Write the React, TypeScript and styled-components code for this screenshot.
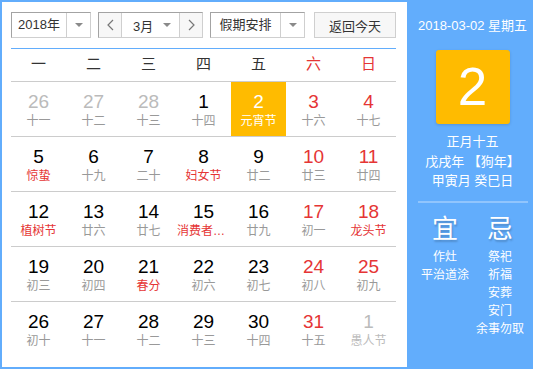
import React from 'react';

import styled, { createGlobalStyle } from 'styled-components';

type Cell = {
    day: number;
    lunar: string;
    other?: boolean;
    weekend?: boolean;
    fest?: boolean;
    today?: boolean;
};

const WEEK = ['一', '二', '三', '四', '五', '六', '日'];

const rows: Cell[][] = [
    [
        { day: 26, lunar: '十一', other: true },
        { day: 27, lunar: '十二', other: true },
        { day: 28, lunar: '十三', other: true },
        { day: 1, lunar: '十四' },
        { day: 2, lunar: '元宵节', today: true },
        { day: 3, lunar: '十六', weekend: true },
        { day: 4, lunar: '十七', weekend: true },
    ],
    [
        { day: 5, lunar: '惊蛰', fest: true },
        { day: 6, lunar: '十九' },
        { day: 7, lunar: '二十' },
        { day: 8, lunar: '妇女节', fest: true },
        { day: 9, lunar: '廿二' },
        { day: 10, lunar: '廿三', weekend: true },
        { day: 11, lunar: '廿四', weekend: true },
    ],
    [
        { day: 12, lunar: '植树节', fest: true },
        { day: 13, lunar: '廿六' },
        { day: 14, lunar: '廿七' },
        { day: 15, lunar: '消费者权益日', fest: true },
        { day: 16, lunar: '廿九' },
        { day: 17, lunar: '初一', weekend: true },
        { day: 18, lunar: '龙头节', weekend: true, fest: true },
    ],
    [
        { day: 19, lunar: '初三' },
        { day: 20, lunar: '初四' },
        { day: 21, lunar: '春分', fest: true },
        { day: 22, lunar: '初六' },
        { day: 23, lunar: '初七' },
        { day: 24, lunar: '初八', weekend: true },
        { day: 25, lunar: '初九', weekend: true },
    ],
    [
        { day: 26, lunar: '初十' },
        { day: 27, lunar: '十一' },
        { day: 28, lunar: '十二' },
        { day: 29, lunar: '十三' },
        { day: 30, lunar: '十四' },
        { day: 31, lunar: '十五', weekend: true },
        { day: 1, lunar: '愚人节', other: true, fest: true },
    ],
];

const GOOD = ['作灶', '平治道涂'];
const BAD = ['祭祀', '祈福', '安葬', '安门', '余事勿取'];

const Chevron = ({ dir }: { dir: 'left' | 'right' }) => (
    <svg width="7" height="12" viewBox="0 0 7 12">
        <polyline
            points={dir === 'left' ? '6,1 1,6 6,11' : '1,1 6,6 1,11'}
            fill="none"
            stroke="#777"
            strokeWidth="1.2"
        />
    </svg>
);

const App = () => {
    return (
        <>
            <GlobalStyle />
            <Frame>
                <Main>
                    <Toolbar>
                        <Select width={80}>
                            <SelectText>2018年</SelectText>
                            <CaretBox>
                                <Triangle />
                            </CaretBox>
                        </Select>
                        <MonthGroup>
                            <NavButton>
                                <Chevron dir="left" />
                            </NavButton>
                            <MonthSelect>
                                <span>3月</span>
                                <Triangle />
                            </MonthSelect>
                            <NavButton last>
                                <Chevron dir="right" />
                            </NavButton>
                        </MonthGroup>
                        <Select width={95}>
                            <SelectText>假期安排</SelectText>
                            <CaretBox>
                                <Triangle />
                            </CaretBox>
                        </Select>
                        <TodayButton>返回今天</TodayButton>
                    </Toolbar>
                    <WeekHead>
                        {WEEK.map((w, i) => (
                            <WeekDay key={w} weekend={i > 4}>
                                {w}
                            </WeekDay>
                        ))}
                    </WeekHead>
                    {rows.map((row, r) => (
                        <WeekRow key={r} last={r === rows.length - 1}>
                            {row.map((c, i) => (
                                <DayCell key={i} today={c.today}>
                                    <DayNum
                                        tone={c.today ? 'today' : c.other ? 'other' : c.weekend ? 'red' : 'normal'}
                                    >
                                        {c.day}
                                    </DayNum>
                                    <Lunar
                                        tone={
                                            c.today
                                                ? 'today'
                                                : c.other && c.fest
                                                ? 'other'
                                                : c.fest
                                                ? 'red'
                                                : 'normal'
                                        }
                                    >
                                        {c.lunar}
                                    </Lunar>
                                </DayCell>
                            ))}
                        </WeekRow>
                    ))}
                </Main>
                <Side>
                    <DateLine>2018-03-02 星期五</DateLine>
                    <BigDay>2</BigDay>
                    <LunarInfo>
                        <div>正月十五</div>
                        <div>戊戌年 【狗年】</div>
                        <div>甲寅月 癸巳日</div>
                    </LunarInfo>
                    <Divider />
                    <Almanac>
                        <AlmanacCol>
                            <AlmanacTitle>宜</AlmanacTitle>
                            {GOOD.map((t) => (
                                <AlmanacItem key={t}>{t}</AlmanacItem>
                            ))}
                        </AlmanacCol>
                        <AlmanacCol>
                            <AlmanacTitle>忌</AlmanacTitle>
                            {BAD.map((t) => (
                                <AlmanacItem key={t}>{t}</AlmanacItem>
                            ))}
                        </AlmanacCol>
                    </Almanac>
                </Side>
            </Frame>
        </>
    );
};

const BLUE = '#62adfc';
const RED = '#e53535';

const GlobalStyle = createGlobalStyle`
    body {
        margin: 0;
        background: #fff;
        font-family: "Liberation Sans", "Noto Sans CJK SC", sans-serif;
    }
`;

const Frame = styled.div`
    box-sizing: border-box;
    width: 533px;
    height: 369px;
    border: 2px solid ${BLUE};
    border-right: none;
    display: flex;
`;

const Main = styled.div`
    width: 385px;
    padding: 10px 11px 0 9px;
    background: #fff;
`;

const Toolbar = styled.div`
    display: flex;
    height: 26px;
    gap: 7px;
    padding-bottom: 10px;
    border-bottom: 1px solid ${BLUE};
    font-size: 13px;
    color: #333;
`;

const Select = styled.div<{ width: number }>`
    box-sizing: border-box;
    width: ${(p) => p.width}px;
    height: 26px;
    display: flex;
    border: 1px solid;
    border-color: #a3a3a3 #cfcfcf #cfcfcf #a3a3a3;
    background: #fff;
`;

const SelectText = styled.div`
    flex: 1;
    display: flex;
    align-items: center;
    justify-content: center;
    border-right: 1px solid #cfcfcf;
    line-height: 24px;
`;

const CaretBox = styled.div`
    width: 23px;
    display: flex;
    align-items: center;
    justify-content: center;
`;

const Triangle = styled.span`
    width: 0;
    height: 0;
    border-left: 4px solid transparent;
    border-right: 4px solid transparent;
    border-top: 4px solid #8a8a8a;
`;

const MonthGroup = styled.div`
    box-sizing: border-box;
    width: 105px;
    height: 26px;
    display: flex;
    border: 1px solid;
    border-color: #a3a3a3 #cfcfcf #cfcfcf #a3a3a3;
`;

const NavButton = styled.div<{ last?: boolean }>`
    width: 22px;
    display: flex;
    align-items: center;
    justify-content: center;
    background: #f7f7f7;
    border-${(p) => (p.last ? 'left' : 'right')}: 1px solid #cfcfcf;
`;

const MonthSelect = styled.div`
    flex: 1;
    display: flex;
    align-items: center;
    justify-content: space-between;
    padding: 0 8px 0 11px;
    background: #fff;
`;

const TodayButton = styled.div`
    box-sizing: border-box;
    width: 82px;
    height: 26px;
    margin-left: 2px;
    display: flex;
    align-items: center;
    justify-content: center;
    border: 1px solid #cfcfcf;
    background: #f7f7f7;
`;

const WeekHead = styled.div`
    display: grid;
    grid-template-columns: repeat(7, 55px);
    height: 32px;
    line-height: 30px;
    border-bottom: 1px solid #cccccc;
`;

const WeekDay = styled.div<{ weekend: boolean }>`
    text-align: center;
    font-size: 15px;
    color: ${(p) => (p.weekend ? RED : '#333')};
`;

const WeekRow = styled.div<{ last: boolean }>`
    display: grid;
    grid-template-columns: repeat(7, 55px);
    height: 54px;
    border-bottom: 1px solid ${(p) => (p.last ? 'transparent' : '#cccccc')};
`;

const DayCell = styled.div<{ today?: boolean }>`
    box-sizing: border-box;
    padding-top: 10px;
    text-align: center;
    overflow: hidden;
    background: ${(p) => (p.today ? '#ffbb00' : 'transparent')};
`;

const numColors = {
    today: '#fff',
    other: '#bbbbbb',
    red: RED,
    normal: '#000',
};

const DayNum = styled.div<{ tone: keyof typeof numColors }>`
    font-size: 19px;
    line-height: 20px;
    color: ${(p) => numColors[p.tone]};
`;

const lunarColors = {
    today: '#fff',
    other: '#bbbbbb',
    red: RED,
    normal: '#999',
};

const Lunar = styled.div<{ tone: keyof typeof lunarColors }>`
    margin: 0 auto;
    max-width: 53px;
    font-size: 12px;
    line-height: 18px;
    white-space: nowrap;
    overflow: hidden;
    text-overflow: ellipsis;
    color: ${(p) => lunarColors[p.tone]};
`;

const Side = styled.div`
    flex: 1;
    padding-left: 5px;
    background: ${BLUE};
    color: #fff;
    display: flex;
    flex-direction: column;
    align-items: center;
`;

const DateLine = styled.div`
    margin-top: 14px;
    font-size: 13px;
    line-height: 20px;
`;

const BigDay = styled.div`
    margin-top: 14px;
    width: 74px;
    height: 74px;
    border-radius: 3px;
    background: #ffbb00;
    box-shadow: 0 1px 3px rgba(0, 0, 0, 0.15);
    font-size: 53px;
    line-height: 74px;
    text-align: center;
`;

const LunarInfo = styled.div`
    margin-top: 8px;
    font-size: 13px;
    line-height: 19.5px;
    text-align: center;
`;

const Divider = styled.div`
    margin-top: 10px;
    width: 110px;
    height: 2px;
    background: rgba(255, 255, 255, 0.3);
`;

const Almanac = styled.div`
    margin-top: 11px;
    display: grid;
    grid-template-columns: 55px 55px;
`;

const AlmanacCol = styled.div`
    display: flex;
    flex-direction: column;
    align-items: center;
`;

const AlmanacTitle = styled.div`
    font-size: 26px;
    line-height: 30px;
    margin-bottom: 4px;
    text-shadow: 1px 2px 2px rgba(0, 0, 0, 0.2);
`;

const AlmanacItem = styled.div`
    font-size: 12px;
    line-height: 18.2px;
    white-space: nowrap;
`;

export default App;
